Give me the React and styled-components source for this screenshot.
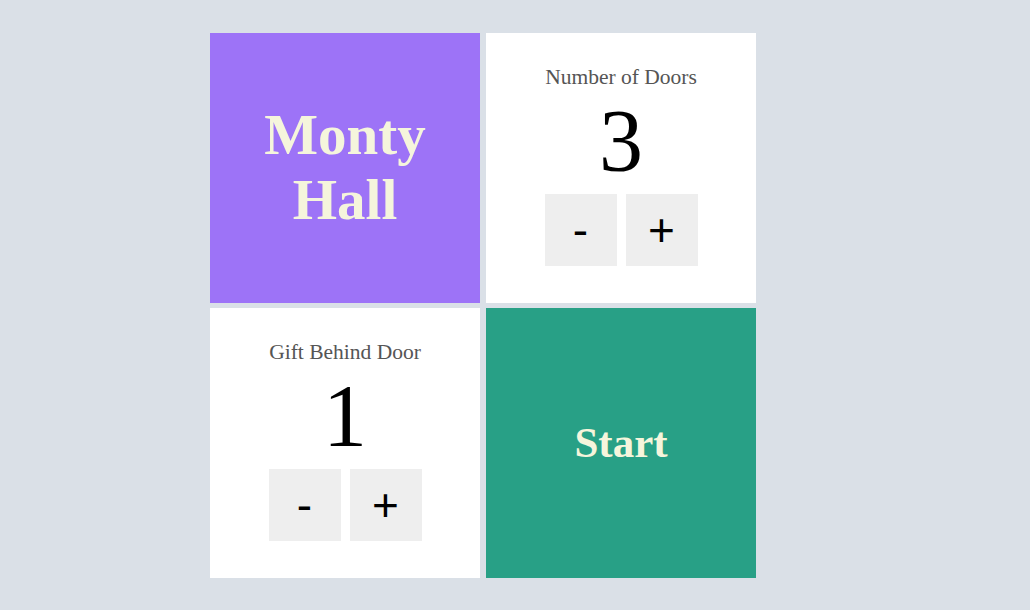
import React, { useState } from "react";
import styled, { createGlobalStyle } from "styled-components";

const GlobalStyle = createGlobalStyle`
  html, body {
    margin: 0;
    padding: 0;
    background: #dae0e7;
  }
  body {
    font-family: "Liberation Serif", "Times New Roman", serif;
  }
`;

const Page = styled.div`
  width: 1030px;
  height: 610px;
  box-sizing: border-box;
  padding: 33px 0 0 210px;
`;

const Board = styled.div`
  display: grid;
  grid-template-columns: 270px 270px;
  grid-auto-rows: 270px;
  column-gap: 6px;
  row-gap: 5px;
`;

const Card = styled.div`
  background: ${(p) => p.$bg || "#ffffff"};
  display: flex;
  flex-direction: column;
  align-items: center;
  justify-content: center;
  text-align: center;
`;

const BigTitle = styled.h1`
  margin: 0;
  font-family: "Liberation Serif", "Times New Roman", serif;
  font-weight: bold;
  font-size: ${(p) => p.$size}px;
  line-height: 1.14;
  color: #f5f5dc;
`;

const Label = styled.div`
  font-family: "Liberation Serif", "Times New Roman", serif;
  font-size: 21.5px;
  color: #555555;
  line-height: 1.15;
  margin-top: -5px;
`;

const Value = styled.div`
  font-family: "Liberation Serif", "Times New Roman", serif;
  font-size: 88px;
  line-height: 1.15;
  color: #000000;
`;

const Controls = styled.div`
  display: flex;
  gap: 9px;
  margin-top: 3px;
`;

const StepButton = styled.button`
  width: 72px;
  height: 72px;
  border: none;
  padding: 0;
  background: #eeeeee;
  font-family: "Liberation Sans", Arial, sans-serif;
  font-size: 46px;
  line-height: 1;
  color: #000000;
  cursor: pointer;
  display: flex;
  align-items: center;
  justify-content: center;
`;

function Counter({ label, value, onDec, onInc }) {
  return (
    <Card>
      <Label>{label}</Label>
      <Value>{value}</Value>
      <Controls>
        <StepButton onClick={onDec}>-</StepButton>
        <StepButton onClick={onInc}>+</StepButton>
      </Controls>
    </Card>
  );
}

export default function App() {
  const [doors, setDoors] = useState(3);
  const [gift, setGift] = useState(1);
  return (
    <>
      <GlobalStyle />
      <Page>
        <Board>
          <Card $bg="#9d73f7">
            <BigTitle $size={57}>
              Monty
              <br />
              Hall
            </BigTitle>
          </Card>
          <Counter
            label="Number of Doors"
            value={doors}
            onDec={() => setDoors((d) => Math.max(3, d - 1))}
            onInc={() => setDoors((d) => d + 1)}
          />
          <Counter
            label="Gift Behind Door"
            value={gift}
            onDec={() => setGift((g) => Math.max(1, g - 1))}
            onInc={() => setGift((g) => Math.min(doors, g + 1))}
          />
          <Card $bg="#28a086">
            <BigTitle $size={43}>Start</BigTitle>
          </Card>
        </Board>
      </Page>
    </>
  );
}
